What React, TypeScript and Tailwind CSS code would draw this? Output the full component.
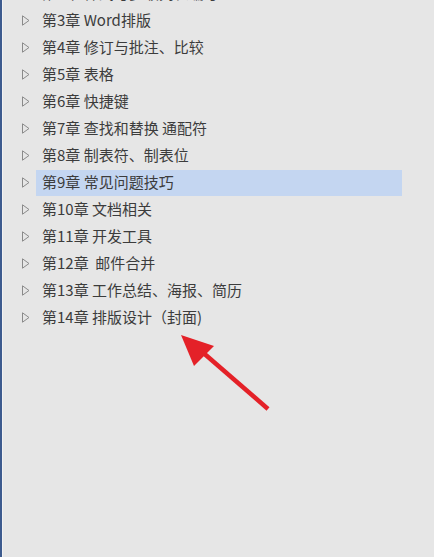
import React from "react";

const rows = [
  "第2章 样式与多级列表编号",
  "第3章 Word排版",
  "第4章 修订与批注、比较",
  "第5章 表格",
  "第6章 快捷键",
  "第7章 查找和替换 通配符",
  "第8章 制表符、制表位",
  "第9章 常见问题技巧",
  "第10章 文档相关",
  "第11章 开发工具",
  "第12章  邮件合并",
  "第13章 工作总结、海报、简历",
  "第14章 排版设计（封面)",
];

function Tri() {
  return (
    <svg width="8" height="11" viewBox="0 0 8 11" className="shrink-0">
      <path d="M0.5 0.8 L7 5.5 L0.5 10.2 Z" fill="none" stroke="#8a8a8a" strokeWidth="1" />
    </svg>
  );
}

export default function App() {
  return (
    <div
      className="relative w-[434px] h-[557px] overflow-hidden bg-[#e6e6e6] flex"
      style={{ fontFamily: '"Microsoft YaHei","Noto Sans CJK SC",sans-serif' }}
    >
      <div className="w-[2px] h-full bg-[#3d5b8e] shrink-0" />
      <div className="w-[1px] h-full bg-[#f2f2f2] shrink-0" />
      <div className="flex-1 flex flex-col -mt-[20px]">
        {rows.map((r, i) => (
          <div key={i} className="h-[27px] flex items-center">
            <div className="w-[19px]" />
            <Tri />
            <div className="w-[6px]" />
            <div
              className={
                "h-[26px] w-[366px] flex items-center pl-[6px] text-[15px] text-[#3c3c3c] whitespace-pre " +
                (i === 7 ? "bg-[#c4d6f1]" : "")
              }
            >
              {r}
            </div>
          </div>
        ))}
      </div>
      <svg className="absolute left-0 top-0" width="434" height="557">
        <line x1="268" y1="409" x2="200" y2="350" stroke="#e42128" strokeWidth="4.5" strokeLinecap="butt" />
        <polygon points="181,335 214,346 194,366" fill="#e42128" />
      </svg>
    </div>
  );
}
